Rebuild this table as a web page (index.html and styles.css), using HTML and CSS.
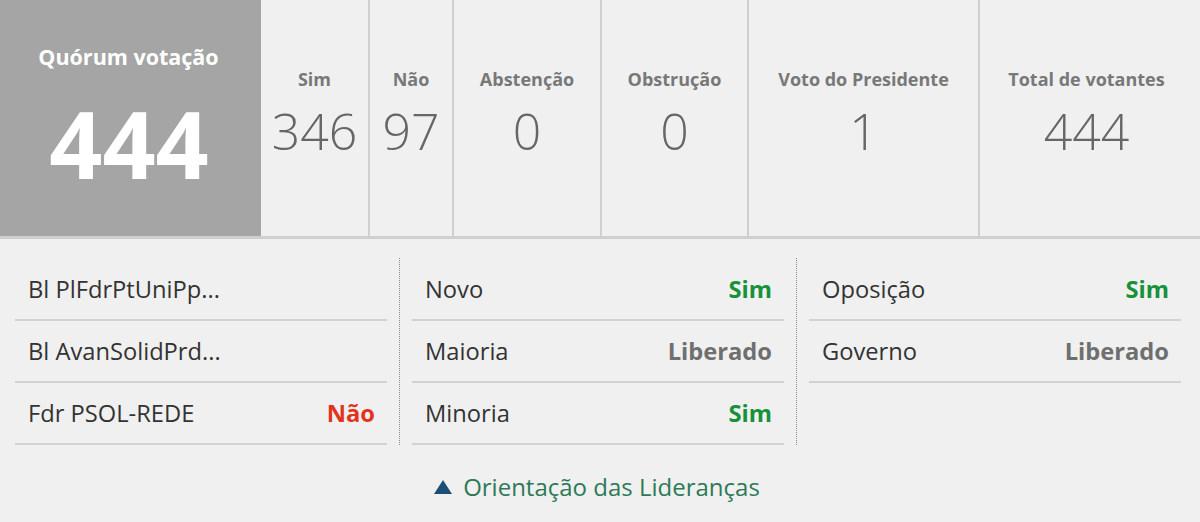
FILE: index.html
```html
<!DOCTYPE html>
<html lang="pt-BR">
<head>
<meta charset="UTF-8">
<meta name="viewport" content="width=device-width, initial-scale=1.0">
<title>Quórum votação</title>
<link rel="stylesheet" href="styles.css">
</head>
<body>
  <div class="placar">
    <div class="quorum">
      <p class="quorum-titulo">Quórum votação</p>
      <p class="quorum-numero">444</p>
    </div>
    <div class="stat col-sim">
      <p class="stat-label">Sim</p>
      <p class="stat-valor">346</p>
    </div>
    <div class="stat col-nao">
      <p class="stat-label">Não</p>
      <p class="stat-valor">97</p>
    </div>
    <div class="stat col-abst">
      <p class="stat-label">Abstenção</p>
      <p class="stat-valor">0</p>
    </div>
    <div class="stat col-obst">
      <p class="stat-label">Obstrução</p>
      <p class="stat-valor">0</p>
    </div>
    <div class="stat col-pres">
      <p class="stat-label">Voto do Presidente</p>
      <p class="stat-valor">1</p>
    </div>
    <div class="stat col-total">
      <p class="stat-label">Total de votantes</p>
      <p class="stat-valor">444</p>
    </div>
  </div>

  <div class="orientacao">
    <div class="grupo">
      <div class="linha"><span class="partido">Bl PlFdrPtUniPp...</span><span class="voto"></span></div>
      <div class="linha"><span class="partido">Bl AvanSolidPrd...</span><span class="voto"></span></div>
      <div class="linha"><span class="partido">Fdr PSOL-REDE</span><span class="voto nao">Não</span></div>
    </div>
    <div class="grupo">
      <div class="linha"><span class="partido">Novo</span><span class="voto sim">Sim</span></div>
      <div class="linha"><span class="partido">Maioria</span><span class="voto liberado">Liberado</span></div>
      <div class="linha"><span class="partido">Minoria</span><span class="voto sim">Sim</span></div>
    </div>
    <div class="grupo">
      <div class="linha"><span class="partido">Oposição</span><span class="voto sim">Sim</span></div>
      <div class="linha"><span class="partido">Governo</span><span class="voto liberado">Liberado</span></div>
    </div>
  </div>

  <div class="rodape">
    <span class="seta"></span>
    <span class="rodape-texto">Orientação das Lideranças</span>
  </div>
</body>
</html>
```

FILE: styles.css
```css
body {
  font-family: "Open Sans", "DejaVu Sans", sans-serif;
  background-color: #f0f0f0;
  margin: 0;
  color: #333333;
}
p {
  margin: 0;
}
.placar {
  display: flex;
  height: 236px;
  border-bottom: 3px solid #cfcfcf;
}
.quorum {
  width: 261px;
  background-color: #a5a5a5;
  color: #ffffff;
  text-align: center;
}
.quorum-titulo {
  font-size: 21.5px;
  font-weight: 700;
  line-height: 28px;
  padding-top: 43px;
  margin-left: -4px;
}
.quorum-numero {
  font-size: 93px;
  font-weight: 700;
  line-height: 110px;
  margin-top: 17px;
  margin-left: -3px;
}
.stat {
  text-align: center;
  border-right: 2px solid #cfcfcf;
}
.stat-label {
  font-size: 18px;
  font-weight: 700;
  color: #787878;
  line-height: 24px;
  padding-top: 67px;
}
.stat-valor {
  font-size: 50px;
  font-weight: 300;
  color: #666666;
  line-height: 64px;
  margin-top: 8px;
}
.col-sim { width: 107px; }
.col-nao { width: 82px; }
.col-abst { width: 146px; }
.col-obst { width: 145px; }
.col-pres { width: 229px; }
.col-total { width: 213px; padding-right: 7px; border-right: none; }

.orientacao {
  display: flex;
  padding: 19px 0 0 15px;
}
.grupo {
  width: 372px;
  padding-top: 1px;
}
.grupo + .grupo {
  border-left: 1px dotted #8a8a8a;
  margin-left: 12px;
  padding-left: 12px;
}
.linha {
  display: flex;
  justify-content: space-between;
  align-items: center;
  height: 60px;
  padding: 0 12px 0 13px;
  border-bottom: 2px solid #d2d2d2;
  font-size: 23.7px;
}
.voto {
  font-weight: 700;
}
.sim {
  color: #17913a;
}
.nao {
  color: #e2341c;
}
.liberado {
  color: #6f6f6f;
}

.rodape {
  display: flex;
  justify-content: center;
  align-items: center;
  gap: 11px;
  padding-top: 25px;
  margin-left: -6px;
}
.seta {
  width: 0;
  height: 0;
  border-left: 9px solid transparent;
  border-right: 9px solid transparent;
  border-bottom: 14px solid #1c4f78;
}
.rodape-texto {
  font-size: 24px;
  color: #2c7a58;
}
```
